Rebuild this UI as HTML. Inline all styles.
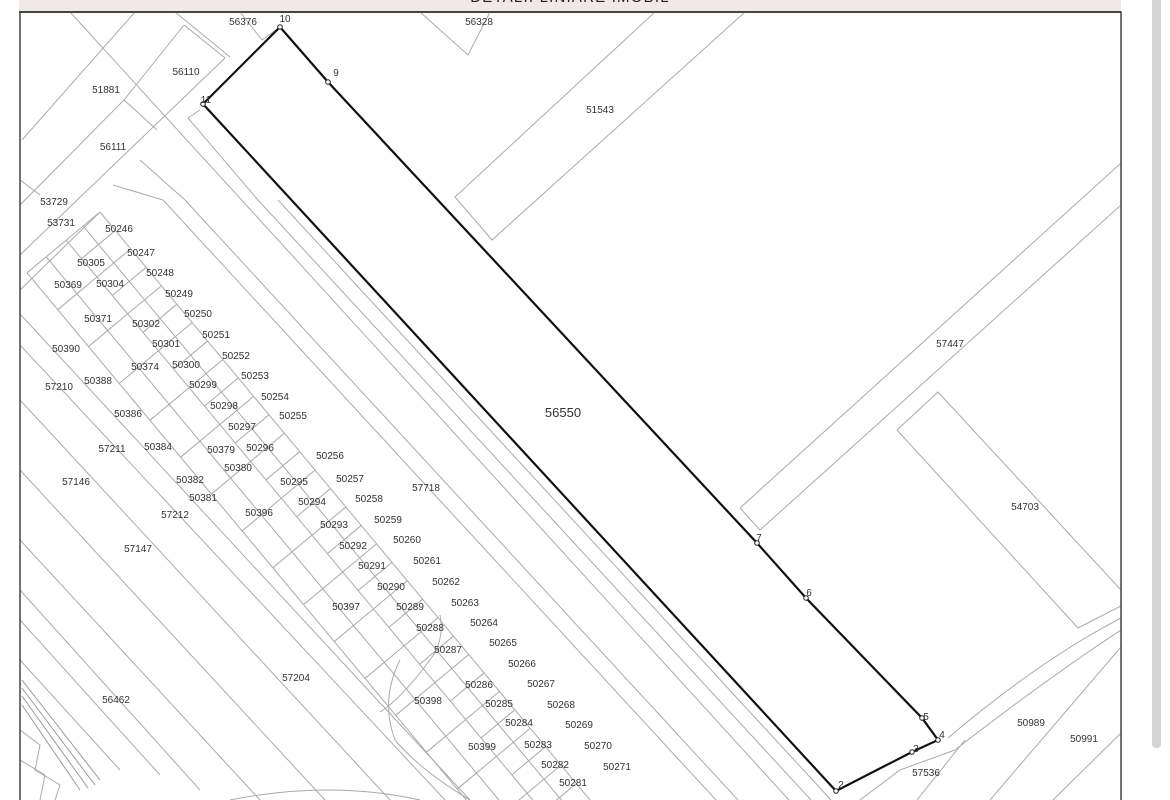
<!DOCTYPE html>
<html><head><meta charset="utf-8">
<style>
html,body{margin:0;padding:0;background:#fff;width:1170px;height:800px;overflow:hidden}
#hdr{position:absolute;left:19px;top:0;width:1102px;height:11px;background:#f1e9e8;border-bottom:2px solid #444;overflow:hidden}
#hdr span{position:absolute;left:0;width:100%;text-align:center;top:-11px;font:15px "Liberation Sans",sans-serif;letter-spacing:1.2px;color:#222}
#sb{position:absolute;left:1152px;top:0;width:9px;height:748px;background:#d4d4d4;border-radius:0 0 4px 4px}
svg{position:absolute;left:0;top:0}
text{font-family:"Liberation Sans",sans-serif;font-size:10px;fill:#333;text-anchor:middle}
</style></head><body>
<div id="hdr"><span>DETALII LINIARE IMOBIL</span></div>
<div id="sb"></div>
<svg width="1170" height="800" viewBox="0 0 1170 800">
<defs><clipPath id="c"><rect x="20" y="12" width="1101" height="790"/></clipPath></defs>
<g clip-path="url(#c)" stroke="#aaa" stroke-width="1" fill="none" id="g">
<line x1="70" y1="12" x2="789" y2="800"/>
<line x1="163" y1="200" x2="716" y2="800"/>
<line x1="185" y1="200" x2="738" y2="800"/>
<line x1="258" y1="200" x2="811" y2="800"/>
<line x1="278" y1="200" x2="831" y2="800"/>
<line x1="188" y1="118" x2="258" y2="200"/>
<line x1="200" y1="110" x2="188" y2="118"/>
<line x1="113" y1="185" x2="163" y2="200"/>
<line x1="140" y1="160" x2="185" y2="200"/>
<line x1="20" y1="314" x2="470" y2="800"/>
<line x1="20" y1="345" x2="445" y2="800"/>
<line x1="20" y1="400" x2="390" y2="800"/>
<line x1="20" y1="470" x2="325" y2="800"/>
<line x1="20" y1="540" x2="260" y2="800"/>
<line x1="20" y1="590" x2="200" y2="790"/>
<line x1="20" y1="620" x2="160" y2="775"/>
<line x1="20" y1="660" x2="120" y2="770"/>
<line x1="22" y1="140" x2="135" y2="12"/>
<line x1="20" y1="205" x2="124" y2="100"/>
<line x1="124" y1="100" x2="184" y2="25"/>
<line x1="20" y1="255" x2="225" y2="58"/>
<line x1="124" y1="100" x2="157" y2="130"/>
<line x1="184" y1="25" x2="225" y2="58"/>
<line x1="175" y1="12" x2="230" y2="57"/>
<line x1="240" y1="12" x2="262" y2="40"/>
<line x1="262" y1="40" x2="280" y2="27"/>
<line x1="40" y1="195" x2="20" y2="180"/>
<line x1="20" y1="290" x2="100" y2="212"/>
<polyline points="420,12 468,55 490,12"/>
<polyline points="655,12 455,197 492,240 745,12"/>
<line x1="740" y1="508" x2="1121" y2="163"/>
<line x1="740" y1="508" x2="760" y2="530"/>
<line x1="760" y1="530" x2="1121" y2="205"/>
<polyline points="897,430 938,392 1121,590"/>
<line x1="897" y1="430" x2="1078" y2="628"/>
<path d="M1078,628 L1121,606"/>
<path d="M948,738 Q1040,660 1121,618"/>
<path d="M955,750 Q1045,680 1121,630"/>
<line x1="1121" y1="647" x2="990" y2="800"/>
<line x1="1121" y1="733" x2="1053" y2="800"/>
<line x1="965" y1="740" x2="917" y2="800"/>
<path d="M860,800 L900,770 L955,750"/>
<path d="M230,800 Q330,780 420,800"/>
<path d="M400,660 Q380,700 395,740 Q420,770 470,800"/>
<path d="M440,615 Q445,640 430,660 Q400,700 380,712"/>
<path d="M20,730 L40,745 L35,770 L60,785 L55,800"/>
<path d="M20,760 L45,775 L40,800"/>
<g stroke="#999">
<line x1="22" y1="680" x2="100" y2="780"/><line x1="22" y1="688" x2="95" y2="785"/>
<line x1="22" y1="696" x2="88" y2="788"/><line x1="22" y1="705" x2="80" y2="790"/>
</g>
</g>
<g clip-path="url(#c)" stroke="#aaa" stroke-width="1" fill="none" id="lots"></g>
<polygon points="280,27 328,82 757,543 806,598 922,718 938,740 912,752 836,791 203,104" fill="none" stroke="#111" stroke-width="2.2"/>
<g fill="#fff" stroke="#222" stroke-width="1">
<circle cx="280" cy="27" r="2.3"/><circle cx="328" cy="82" r="2.3"/><circle cx="203" cy="104" r="2.3"/>
<circle cx="757" cy="543" r="2.3"/><circle cx="806" cy="598" r="2.3"/><circle cx="922" cy="718" r="2.3"/>
<circle cx="938" cy="740" r="2.3"/><circle cx="912" cy="752" r="2.3"/><circle cx="836" cy="791" r="2.3"/>
</g>
<rect x="20" y="12" width="1101" height="800" fill="none" stroke="#444" stroke-width="1.5"/>
<g>
<text x="243" y="25">56376</text><text x="285" y="22">10</text><text x="479" y="25">56328</text>
<text x="186" y="75">56110</text><text x="336" y="76">9</text><text x="106" y="93">51881</text>
<text x="206" y="103">11</text><text x="600" y="113">51543</text><text x="113" y="150">56111</text>
<text x="54" y="205">53729</text><text x="61" y="226">53731</text><text x="119" y="232">50246</text>
<text x="141" y="256">50247</text><text x="91" y="266">50305</text><text x="160" y="276">50248</text>
<text x="68" y="288">50369</text><text x="110" y="287">50304</text><text x="179" y="297">50249</text>
<text x="198" y="317">50250</text><text x="98" y="322">50371</text><text x="146" y="327">50302</text>
<text x="216" y="338">50251</text><text x="66" y="352">50390</text><text x="166" y="347">50301</text>
<text x="236" y="359">50252</text><text x="145" y="370">50374</text><text x="186" y="368">50300</text>
<text x="255" y="379">50253</text><text x="59" y="390">57210</text><text x="98" y="384">50388</text>
<text x="203" y="388">50299</text><text x="275" y="400">50254</text><text x="224" y="409">50298</text>
<text x="293" y="419">50255</text><text x="128" y="417">50386</text><text x="242" y="430">50297</text>
<text x="112" y="452">57211</text><text x="158" y="450">50384</text><text x="221" y="453">50379</text>
<text x="260" y="451">50296</text><text x="330" y="459">50256</text><text x="238" y="471">50380</text>
<text x="76" y="485">57146</text><text x="190" y="483">50382</text><text x="294" y="485">50295</text>
<text x="350" y="482">50257</text><text x="426" y="491">57718</text><text x="203" y="501">50381</text>
<text x="312" y="505">50294</text><text x="369" y="502">50258</text><text x="175" y="518">57212</text>
<text x="259" y="516">50396</text><text x="334" y="528">50293</text><text x="388" y="523">50259</text>
<text x="138" y="552">57147</text><text x="353" y="549">50292</text><text x="407" y="543">50260</text>
<text x="372" y="569">50291</text><text x="427" y="564">50261</text><text x="391" y="590">50290</text>
<text x="446" y="585">50262</text><text x="346" y="610">50397</text><text x="410" y="610">50289</text>
<text x="465" y="606">50263</text><text x="430" y="631">50288</text><text x="484" y="626">50264</text>
<text x="448" y="653">50287</text><text x="503" y="646">50265</text><text x="522" y="667">50266</text>
<text x="296" y="681">57204</text><text x="116" y="703">56462</text><text x="479" y="688">50286</text>
<text x="541" y="687">50267</text><text x="428" y="704">50398</text><text x="499" y="707">50285</text>
<text x="561" y="708">50268</text><text x="519" y="726">50284</text><text x="579" y="728">50269</text>
<text x="482" y="750">50399</text><text x="538" y="748">50283</text><text x="598" y="749">50270</text>
<text x="555" y="768">50282</text><text x="617" y="770">50271</text><text x="573" y="786">50281</text>
<text x="563" y="417" style="font-size:13px;fill:#333">56550</text>
<text x="950" y="347">57447</text><text x="1025" y="510">54703</text>
<text x="759" y="541">7</text><text x="809" y="596">6</text><text x="926" y="720">5</text>
<text x="942" y="738">4</text><text x="916" y="752">3</text><text x="841" y="788">2</text>
<text x="1031" y="726">50989</text><text x="1084" y="742">50991</text><text x="926" y="776">57536</text>
</g>
</svg>
<script>
(function(){
var g=document.getElementById('lots'),ns='http://www.w3.org/2000/svg';
function L(a,b,c,d){var l=document.createElementNS(ns,'line');l.setAttribute('x1',a);l.setAttribute('y1',b);l.setAttribute('x2',c);l.setAttribute('y2',d);g.appendChild(l);}
var s=1.2, ux=1/Math.sqrt(1+s*s), uy=s*ux, px=-uy, py=ux;
var offs=[0,22,44,70,95];
offs.forEach(function(o){var x0=100+px*o,y0=212+py*o;var t=(800-y0)/uy;L(x0,y0,x0+ux*t,800);});
for(var k=0;k<32;k++){var t=k*24;var bx=100+ux*t,by=212+uy*t;
 L(bx,by,bx+px*44,by+py*44);
 if(k%2==0){L(bx+px*44,by+py*44,bx+px*95,by+py*95);}
}
})();
</script>
</body></html>
